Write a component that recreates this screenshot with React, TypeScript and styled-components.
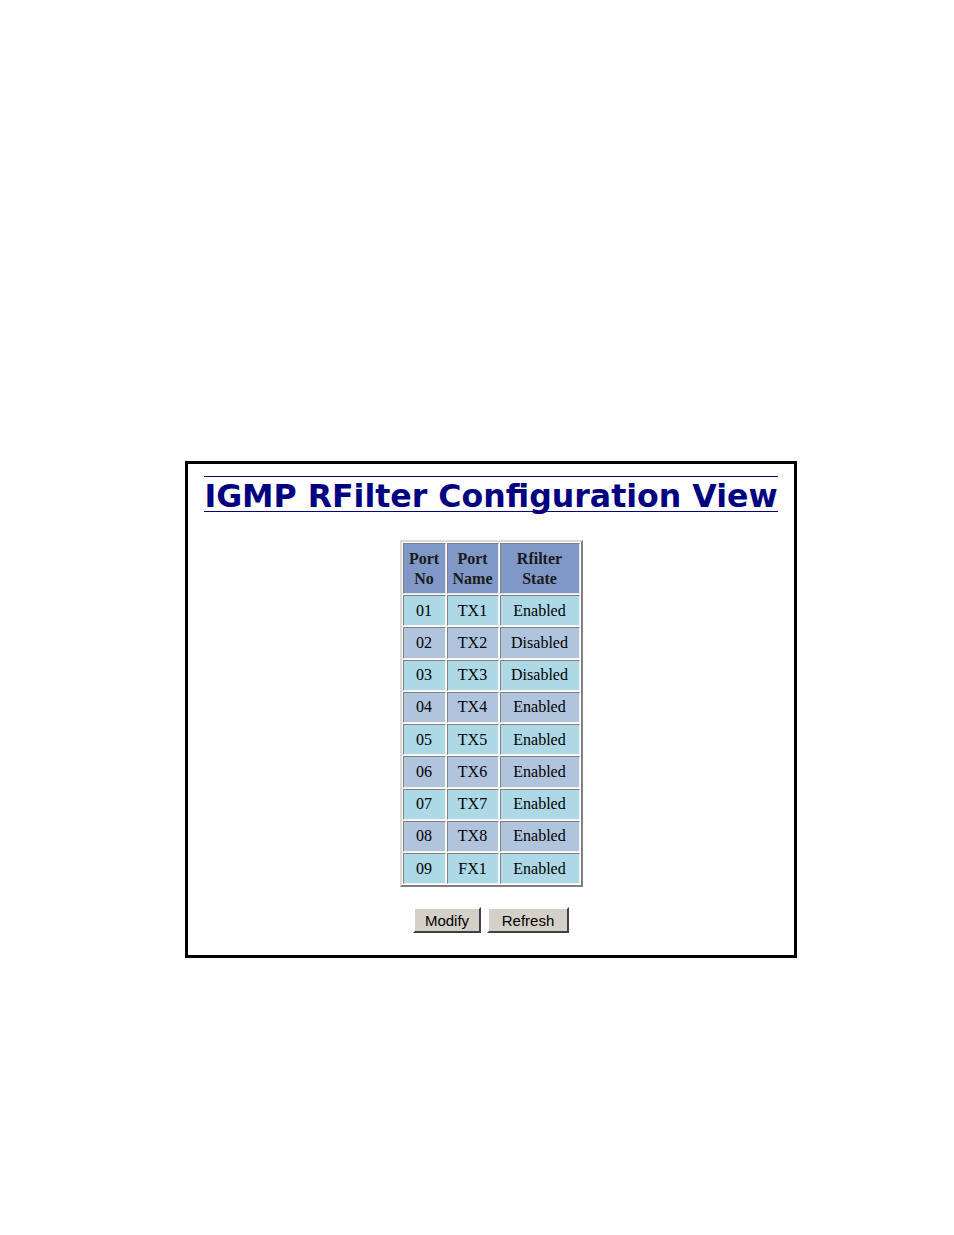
import React from 'react';
import styled, { createGlobalStyle } from 'styled-components';

const GlobalStyle = createGlobalStyle`
  html, body {
    margin: 0;
    padding: 0;
    background: #ffffff;
  }
`;

interface PortRow {
  no: string;
  name: string;
  state: 'Enabled' | 'Disabled';
}

const rows: PortRow[] = [
  { no: '01', name: 'TX1', state: 'Enabled' },
  { no: '02', name: 'TX2', state: 'Disabled' },
  { no: '03', name: 'TX3', state: 'Disabled' },
  { no: '04', name: 'TX4', state: 'Enabled' },
  { no: '05', name: 'TX5', state: 'Enabled' },
  { no: '06', name: 'TX6', state: 'Enabled' },
  { no: '07', name: 'TX7', state: 'Enabled' },
  { no: '08', name: 'TX8', state: 'Enabled' },
  { no: '09', name: 'FX1', state: 'Enabled' },
];

export default function App() {
  return (
    <Page>
      <GlobalStyle />
      <Frame>
        <TitleBlock>
          <Title>IGMP RFilter Configuration View</Title>
        </TitleBlock>
        <PortTable>
          <thead>
            <tr>
              <HeadCell $width={37}>
                Port
                <br />
                No
              </HeadCell>
              <HeadCell $width={46}>
                Port
                <br />
                Name
              </HeadCell>
              <HeadCell $width={74}>
                Rfilter
                <br />
                State
              </HeadCell>
            </tr>
          </thead>
          <tbody>
            {rows.map((row, i) => (
              <tr key={row.no}>
                <Cell $even={i % 2 === 1}>{row.no}</Cell>
                <Cell $even={i % 2 === 1}>{row.name}</Cell>
                <Cell $even={i % 2 === 1}>{row.state}</Cell>
              </tr>
            ))}
          </tbody>
        </PortTable>
        <ButtonRow>
          <FormButton $width={68}>Modify</FormButton>
          <FormButton $width={82}>Refresh</FormButton>
        </ButtonRow>
      </Frame>
    </Page>
  );
}

const Page = styled.div`
  padding: 461px 0 0 185px;
  height: 1235px;
  box-sizing: border-box;
`;

const Frame = styled.section`
  width: 612px;
  height: 497px;
  box-sizing: border-box;
  border: 3px solid #000000;
  display: flex;
  flex-direction: column;
  align-items: center;
`;

const TitleBlock = styled.div`
  margin-top: 12px;
  border-top: 1px solid #000080;
  border-bottom: 1px solid #000080;
  width: 574px;
  display: flex;
  justify-content: center;
`;

const Title = styled.h1`
  margin: 0;
  padding: 4px 0 0;
  font-family: 'DejaVu Sans', Verdana, sans-serif;
  font-weight: bold;
  font-size: 31.6px;
  line-height: 30px;
  color: #000080;
  white-space: nowrap;
`;

const PortTable = styled.table`
  margin-top: 28px;
  border-collapse: separate;
  border-spacing: 1px;
  border: 2px solid;
  border-color: #dcdad5 #808080 #808080 #dcdad5;
  font-family: 'Liberation Serif', 'Times New Roman', serif;
  font-size: 16px;
  color: #000000;
`;

const HeadCell = styled.th<{ $width: number }>`
  width: ${({ $width }) => $width}px;
  height: 49px;
  padding: 0 2px;
  background: #7f98c8;
  border: 1px solid;
  border-color: #808080 #e8e8e8 #e8e8e8 #808080;
  font-weight: bold;
  line-height: 20px;
  text-align: center;
  color: #1a1a1a;
`;

const Cell = styled.td<{ $even: boolean }>`
  height: 29.25px;
  padding: 0 2px;
  background: ${({ $even }) => ($even ? '#b0c4de' : '#add8e6')};
  border: 1px solid;
  border-color: #808080 #f4f4f4 #f4f4f4 #808080;
  text-align: center;
  line-height: 18px;
`;

const ButtonRow = styled.div`
  margin-top: 20px;
  display: flex;
  gap: 6px;
`;

const FormButton = styled.button<{ $width: number }>`
  width: ${({ $width }) => $width}px;
  height: 26px;
  padding: 0;
  background: #d4d0c8;
  border: 2px solid;
  border-color: #ffffff #404040 #404040 #ffffff;
  font-family: 'Liberation Sans', Arial, sans-serif;
  font-size: 15px;
  color: #000000;
`;
